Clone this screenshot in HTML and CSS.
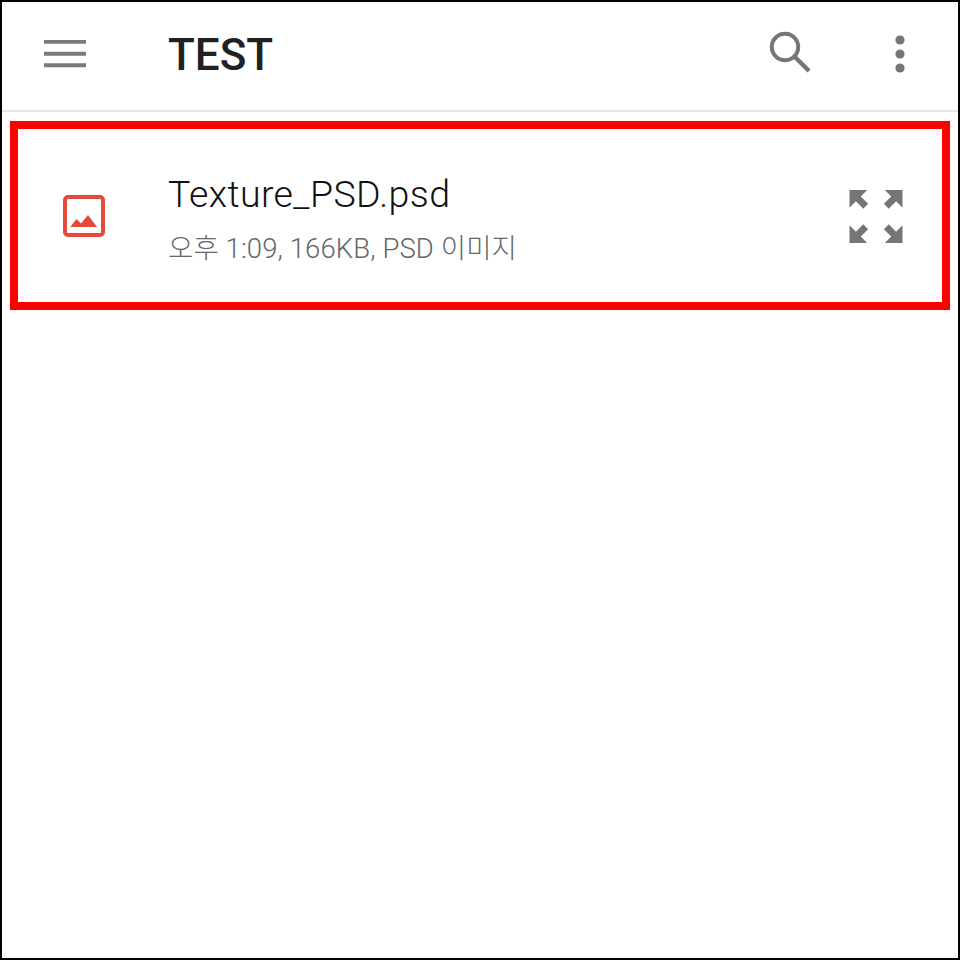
FILE: index.html
```html
<!DOCTYPE html>
<html lang="ko">
<head>
    <meta charset="UTF-8">
    <meta name="viewport" content="width=device-width, initial-scale=1.0">
    <title>TEST</title>
    <link rel="stylesheet" href="styles.css">
</head>
<body>
    <div class="frame">
        <header class="app-bar">
            <svg class="icon-menu" width="44" height="28" viewBox="0 0 44 28">
                <path d="M1 1.700H43M1 13.700H43M1 25.300H43" stroke="#7a7a7a" stroke-width="4" fill="none"/>
            </svg>
            <h1>TEST</h1>
            <svg class="icon-search" width="44" height="44" viewBox="0 0 44 44">
                <circle cx="17" cy="17" r="13.200" stroke="#757575" stroke-width="4" fill="none"/>
                <path d="M26.500 26.500L41 41" stroke="#757575" stroke-width="4.400" fill="none"/>
            </svg>
            <svg class="icon-more" width="10" height="38" viewBox="0 0 10 38">
                <circle cx="5" cy="5" r="4.600" fill="#757575"/>
                <circle cx="5" cy="19" r="4.600" fill="#757575"/>
                <circle cx="5" cy="33" r="4.600" fill="#757575"/>
            </svg>
        </header>

        <div class="file-row">
            <svg class="icon-image" width="42" height="42" viewBox="0 0 42 42">
                <rect x="2" y="2" width="38" height="38" rx="3" stroke="#e5493a" stroke-width="4" fill="none"/>
                <path d="M7.300 32L13.500 24L18 28.500L25 20L34 32Z" fill="#e5493a"/>
            </svg>
            <div class="file-info">
                <div class="file-name">Texture_PSD.psd</div>
                <div class="file-meta">오후 1:09, 166KB, PSD 이미지</div>
            </div>
            <svg class="icon-expand" width="54" height="53" viewBox="0 0 54 54">
                <path d="M0 0H18L11.500 6.500L19 14L14 19L6.500 11.500L0 18Z" fill="#757575"/>
                <path d="M54 0H36L42.500 6.500L35 14L40 19L47.500 11.500L54 18Z" fill="#757575"/>
                <path d="M0 54H18L11.500 47.500L19 40L14 35L6.500 42.500L0 36Z" fill="#757575"/>
                <path d="M54 54H36L42.500 47.500L35 40L40 35L47.500 42.500L54 36Z" fill="#757575"/>
            </svg>
        </div>
    </div>
</body>
</html>
```

FILE: styles.css
```css
* {
    box-sizing: border-box;
}
body {
    margin: 0;
    font-family: Roboto, "Noto Sans CJK KR", sans-serif;
    background-color: #fff;
}
.frame {
    width: 960px;
    height: 960px;
    border: 2px solid #000;
    padding-bottom: 10px;
}
.app-bar {
    display: flex;
    align-items: center;
    height: 110px;
    padding: 0 53px 4px 41px;
    border-bottom: 2px solid #e6e6e6;
}
.app-bar h1 {
    flex: 1;
    margin: 2px 0 0 81px;
    font-size: 44px;
    font-weight: 500;
    color: #212121;
}
.icon-search {
    margin: 0 83px 4px 0;
}
.file-row {
    display: flex;
    align-items: center;
    height: 189px;
    margin: 9px 8px 0;
    padding: 0 39px 0 45px;
    border: 8.500px solid #f00;
}
.file-info {
    flex: 1;
    margin: 6px 0 0 63px;
}
.file-name {
    font-size: 37.500px;
    font-weight: 300;
    letter-spacing: 0.4px;
    color: #111;
}
.file-meta {
    margin-top: 10px;
    font-size: 27.500px;
    font-weight: 300;
    letter-spacing: 0.1px;
    color: #666;
}
.icon-expand {
    margin-top: 2px;
}
```
